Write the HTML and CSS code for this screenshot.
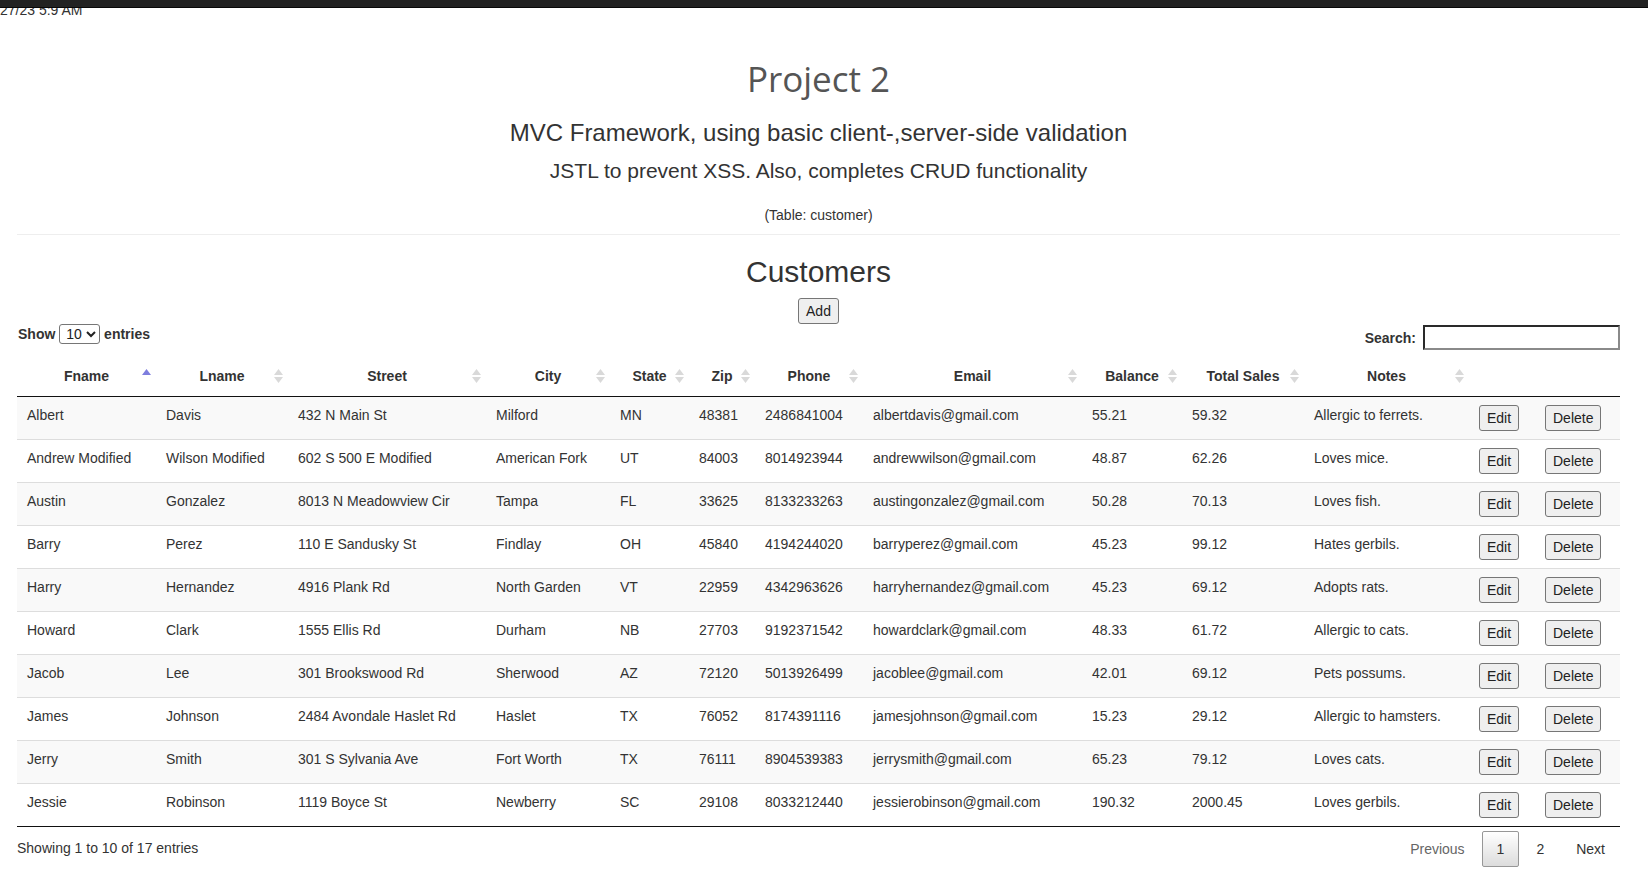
FILE: index.html
```html
<!DOCTYPE html>
<html lang="en">
<head>
<meta charset="utf-8">
<title>Project 2 - Customers</title>
<link rel="stylesheet" href="styles.css">
</head>
<body>
<div class="topbar"></div>
<div class="stamp">27/23 5:9 AM</div>
<main class="page">
  <header class="intro">
    <h1 class="title">Project 2</h1>
    <h3 class="subtitle">MVC Framework, using basic client-,server-side validation</h3>
    <h4 class="subtitle2">JSTL to prevent XSS. Also, completes CRUD functionality</h4>
    <p class="note">(Table: customer)</p>
  </header>
  <hr class="rule">
  <section class="customers">
    <h2 class="section-title">Customers</h2>
    <div class="add-row"><button class="btn" type="button">Add</button></div>
    <div class="dt-wrapper">
      <div class="dt-controls">
        <label class="dt-length">Show <select class="dt-select"><option>10</option><option>25</option><option>50</option><option>100</option></select> entries</label>
        <label class="dt-filter">Search:<input type="search" class="dt-search"></label>
      </div>
      <table class="dt">
        <colgroup>
          <col class="c-fname"><col class="c-lname"><col class="c-street"><col class="c-city"><col class="c-state"><col class="c-zip"><col class="c-phone"><col class="c-email"><col class="c-balance"><col class="c-sales"><col class="c-notes"><col class="c-edit"><col class="c-delete">
        </colgroup>
        <thead>
          <tr>
            <th class="sort asc">Fname</th>
            <th class="sort">Lname</th>
            <th class="sort">Street</th>
            <th class="sort">City</th>
            <th class="sort">State</th>
            <th class="sort">Zip</th>
            <th class="sort">Phone</th>
            <th class="sort">Email</th>
            <th class="sort">Balance</th>
            <th class="sort">Total Sales</th>
            <th class="sort">Notes</th>
            <th></th>
            <th></th>
          </tr>
        </thead>
        <tbody>
          <tr><td>Albert</td><td>Davis</td><td>432 N Main St</td><td>Milford</td><td>MN</td><td>48381</td><td>2486841004</td><td>albertdavis@gmail.com</td><td>55.21</td><td>59.32</td><td>Allergic to ferrets.</td><td><button class="btn" type="button">Edit</button></td><td><button class="btn" type="button">Delete</button></td></tr>
          <tr><td>Andrew Modified</td><td>Wilson Modified</td><td>602 S 500 E Modified</td><td>American Fork</td><td>UT</td><td>84003</td><td>8014923944</td><td>andrewwilson@gmail.com</td><td>48.87</td><td>62.26</td><td>Loves mice.</td><td><button class="btn" type="button">Edit</button></td><td><button class="btn" type="button">Delete</button></td></tr>
          <tr><td>Austin</td><td>Gonzalez</td><td>8013 N Meadowview Cir</td><td>Tampa</td><td>FL</td><td>33625</td><td>8133233263</td><td>austingonzalez@gmail.com</td><td>50.28</td><td>70.13</td><td>Loves fish.</td><td><button class="btn" type="button">Edit</button></td><td><button class="btn" type="button">Delete</button></td></tr>
          <tr><td>Barry</td><td>Perez</td><td>110 E Sandusky St</td><td>Findlay</td><td>OH</td><td>45840</td><td>4194244020</td><td>barryperez@gmail.com</td><td>45.23</td><td>99.12</td><td>Hates gerbils.</td><td><button class="btn" type="button">Edit</button></td><td><button class="btn" type="button">Delete</button></td></tr>
          <tr><td>Harry</td><td>Hernandez</td><td>4916 Plank Rd</td><td>North Garden</td><td>VT</td><td>22959</td><td>4342963626</td><td>harryhernandez@gmail.com</td><td>45.23</td><td>69.12</td><td>Adopts rats.</td><td><button class="btn" type="button">Edit</button></td><td><button class="btn" type="button">Delete</button></td></tr>
          <tr><td>Howard</td><td>Clark</td><td>1555 Ellis Rd</td><td>Durham</td><td>NB</td><td>27703</td><td>9192371542</td><td>howardclark@gmail.com</td><td>48.33</td><td>61.72</td><td>Allergic to cats.</td><td><button class="btn" type="button">Edit</button></td><td><button class="btn" type="button">Delete</button></td></tr>
          <tr><td>Jacob</td><td>Lee</td><td>301 Brookswood Rd</td><td>Sherwood</td><td>AZ</td><td>72120</td><td>5013926499</td><td>jacoblee@gmail.com</td><td>42.01</td><td>69.12</td><td>Pets possums.</td><td><button class="btn" type="button">Edit</button></td><td><button class="btn" type="button">Delete</button></td></tr>
          <tr><td>James</td><td>Johnson</td><td>2484 Avondale Haslet Rd</td><td>Haslet</td><td>TX</td><td>76052</td><td>8174391116</td><td>jamesjohnson@gmail.com</td><td>15.23</td><td>29.12</td><td>Allergic to hamsters.</td><td><button class="btn" type="button">Edit</button></td><td><button class="btn" type="button">Delete</button></td></tr>
          <tr><td>Jerry</td><td>Smith</td><td>301 S Sylvania Ave</td><td>Fort Worth</td><td>TX</td><td>76111</td><td>8904539383</td><td>jerrysmith@gmail.com</td><td>65.23</td><td>79.12</td><td>Loves cats.</td><td><button class="btn" type="button">Edit</button></td><td><button class="btn" type="button">Delete</button></td></tr>
          <tr><td>Jessie</td><td>Robinson</td><td>1119 Boyce St</td><td>Newberry</td><td>SC</td><td>29108</td><td>8033212440</td><td>jessierobinson@gmail.com</td><td>190.32</td><td>2000.45</td><td>Loves gerbils.</td><td><button class="btn" type="button">Edit</button></td><td><button class="btn" type="button">Delete</button></td></tr>
        </tbody>
      </table>
      <div class="dt-footer">
        <div class="dt-info">Showing 1 to 10 of 17 entries</div>
        <div class="dt-paginate"><a class="pg disabled">Previous</a><a class="pg current">1</a><a class="pg">2</a><a class="pg">Next</a></div>
      </div>
    </div>
  </section>
</main>
</body>
</html>
```

FILE: styles.css
```css
* { box-sizing: border-box; }

html, body {
  margin: 0;
  padding: 0;
  background: #fff;
}

body {
  font-family: "Liberation Sans", Arial, sans-serif;
  font-size: 14px;
  line-height: 20px;
  color: #333;
}

.topbar {
  position: absolute;
  top: 0;
  left: 0;
  right: 0;
  height: 8px;
  background: #222;
  border-bottom: 1px solid #080808;
}

.stamp {
  height: 20px;
  line-height: 20px;
  white-space: nowrap;
}

.page {
  width: 1603px;
  margin-left: 17px;
}

.intro {
  text-align: center;
  padding-top: 39px;
}

.title {
  margin: 0;
  font-family: "Open Sans", sans-serif;
  font-weight: 400;
  font-size: 35px;
  line-height: 40px;
  color: #555;
}

.subtitle {
  margin: 19px 0 0;
  font-weight: 400;
  font-size: 24px;
  line-height: 30px;
  color: #333;
}

.subtitle2 {
  margin: 10px 0 0;
  font-weight: 400;
  font-size: 21px;
  line-height: 26px;
  color: #333;
}

.note {
  margin: 21px 0 0;
  font-size: 14px;
  line-height: 20px;
}

.rule {
  margin: 9px 0 0;
  border: 0;
  border-top: 1px solid #eee;
  height: 0;
}

.section-title {
  margin: 20px 0 0;
  text-align: center;
  font-weight: 400;
  font-size: 30px;
  line-height: 34px;
  color: #333;
}

.add-row {
  margin-top: 9px;
  display: flex;
  justify-content: center;
}

.btn {
  font-family: inherit;
  font-size: 14px;
  line-height: 20px;
  padding: 2px 7px;
  border: 1px solid #767676;
  border-radius: 3px;
  background: #efefef;
  color: #222;
  margin: 0;
}

.dt-controls {
  display: flex;
  justify-content: space-between;
  align-items: flex-start;
  height: 26px;
}

.dt-length {
  font-weight: bold;
  line-height: 20px;
  padding-left: 1px;
}

.dt-select {
  font-family: inherit;
  font-size: 14px;
  width: 41px;
  height: 20px;
  padding: 0 0 0 2px;
  border: 1px solid #767676;
  border-radius: 3px;
  background: #fff;
  color: #222;
  vertical-align: top;
}

.dt-filter {
  margin-top: 1px;
  display: flex;
  align-items: center;
  font-weight: bold;
}

.dt-search {
  margin: 0 0 0 7px;
  width: 197px;
  height: 25px;
  padding: 1px 2px;
  border-width: 2px;
  border-style: solid;
  border-color: #2a2a2a #8a8a8a #8a8a8a #2a2a2a;
  background: #fff;
  font-family: inherit;
  font-size: 14px;
}

.dt {
  margin-top: 6px;
  width: 1603px;
  table-layout: fixed;
  border-collapse: separate;
  border-spacing: 0;
  border-bottom: 1px solid #111;
}

.c-fname { width: 139px; }
.c-lname { width: 132px; }
.c-street { width: 198px; }
.c-city { width: 124px; }
.c-state { width: 79px; }
.c-zip { width: 66px; }
.c-phone { width: 108px; }
.c-email { width: 219px; }
.c-balance { width: 100px; }
.c-sales { width: 122px; }
.c-notes { width: 165px; }
.c-edit { width: 66px; }
.c-delete { width: 85px; }

.dt th {
  padding: 10px 18px;
  line-height: 20px;
  font-weight: bold;
  text-align: center;
  border-bottom: 1px solid #111;
  white-space: nowrap;
}

.dt th.sort {
  position: relative;
}

.dt th.sort::before,
.dt th.sort::after {
  content: "";
  position: absolute;
  right: 5px;
  width: 9px;
  height: 6px;
  background: #d9d9d9;
}

.dt th.sort::before {
  top: 13px;
  clip-path: polygon(50% 0, 100% 100%, 0 100%);
}

.dt th.sort::after {
  top: 21px;
  clip-path: polygon(0 0, 100% 0, 50% 100%);
}

.dt th.asc::before {
  background: #7e7ede;
}

.dt th.asc::after {
  display: none;
}

.dt td {
  padding: 8px 10px;
  line-height: 20px;
  vertical-align: top;
  border-top: 1px solid #ddd;
  white-space: nowrap;
}

.dt tbody tr:first-child td {
  border-top: none;
}

.dt tbody tr:nth-child(odd) td {
  background: #f9f9f9;
}

.dt-footer {
  display: flex;
  justify-content: space-between;
  align-items: flex-start;
}

.dt-info {
  padding-top: 10.5px;
}

.dt-paginate {
  padding-top: 3.5px;
  display: flex;
}

.pg {
  display: inline-block;
  min-width: 21px;
  padding: 7px 14px;
  margin-left: 2px;
  border: 1px solid transparent;
  border-radius: 2px;
  line-height: 20px;
  text-align: center;
  color: #333;
  text-decoration: none;
}

.pg.disabled {
  color: #666;
}

.pg.current {
  border-color: #979797;
  background: linear-gradient(to bottom, #fff 0%, #dcdcdc 100%);
}
```
